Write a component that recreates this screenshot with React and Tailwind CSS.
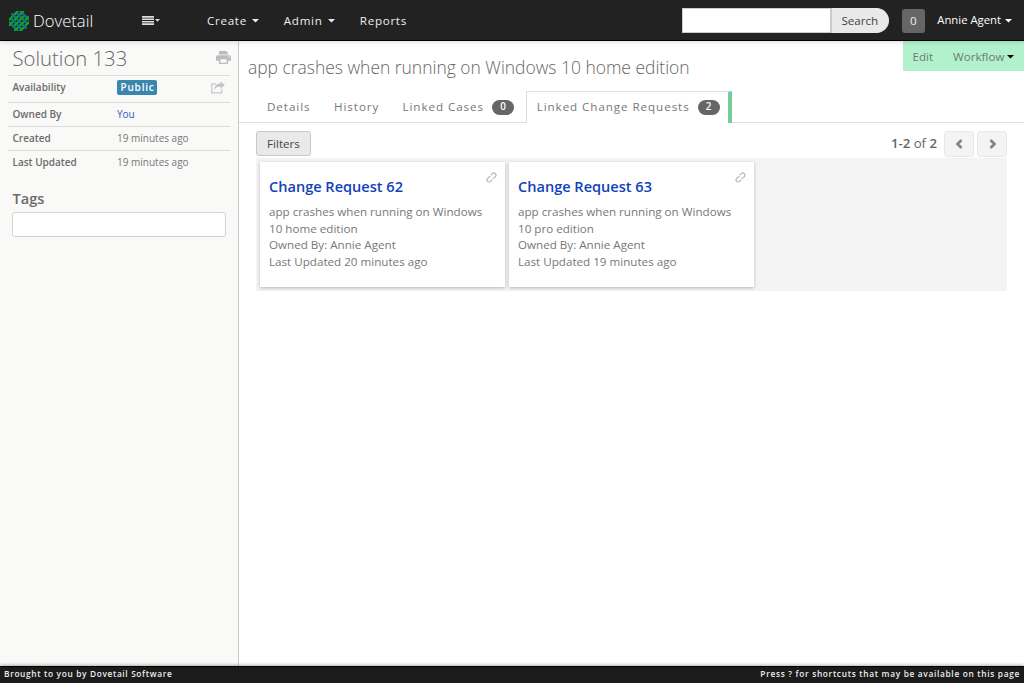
import React from 'react';

function Caret({ className = '' }) {
  return (
    <svg className={`mt-[1px] h-[4px] w-[7px] shrink-0 ${className}`} viewBox="0 0 7 4" fill="currentColor">
      <path d="M0 0h7L3.5 3.6z" />
    </svg>
  );
}

const STRANDS = [-2, -1, 0, 1, 2];

function Logo() {
  return (
    <svg className="h-5 w-5 shrink-0" viewBox="-10 -10 20 20">
      <clipPath id="logo-round"><path d="M-6-10H6L10-6V6L6 10H-6L-10 6V-6z" /></clipPath>
      <g clipPath="url(#logo-round)">
        <g transform="rotate(45)">
          {STRANDS.flatMap((i) =>
            STRANDS.map((j) => {
              const blue = (i + j) % 2 === 0;
              const x = i * 3.9;
              const y = j * 3.9;
              return blue ? (
                <rect key={`${i},${j}`} x={x - 2.7} y={y - 1.1} width="5.4" height="2.2" fill="#12779f" />
              ) : (
                <rect key={`${i},${j}`} x={x - 1.1} y={y - 2.7} width="2.2" height="5.4" fill="#0fae1c" />
              );
            })
          )}
        </g>
      </g>
    </svg>
  );
}

function PrintIcon() {
  return (
    <svg className="h-[13px] w-[15px]" viewBox="0 0 15 13" fill="#bcbcbc">
      <path d="M3 0h7l2 2v1.500H3z" />
      <path fillRule="evenodd" d="M1.500 4.300h12Q15 4.300 15 5.800V9.700h-3V13H3V9.700H0V5.800Q0 4.300 1.500 4.300zM4.400 8.300v3.400h6.200V8.300zM12.300 5.600v1.100h1.200V5.600z" />
    </svg>
  );
}

function ShareIcon() {
  return (
    <svg className="h-[13px] w-[14px]" viewBox="0 0 14 13">
      <path d="M5 2.900H.8v9h9.900V8.200" fill="none" stroke="#c8c8c8" strokeWidth="1.300" />
      <path d="M9.400.4L13.900 4 9.400 7.800V5.600C6.500 5.500 4.700 6.600 3.400 9 3.300 5.200 5.600 2.600 9.400 2.500z" fill="#c4c4c4" />
    </svg>
  );
}

function LinkIcon() {
  return (
    <svg className="h-[11px] w-[11px]" viewBox="0 0 24 24" fill="none" stroke="#b4b4b4" strokeWidth="2.600" strokeLinecap="round">
      <g transform="rotate(-45 12 12)">
        <path d="M8.500 16.500H4.700A4.500 4.500 0 0 1 4.700 7.500H8.500a4 4 0 0 1 2.500 1" />
        <path d="M15.500 7.500h3.800a4.500 4.500 0 0 1 0 9h-3.800a4 4 0 0 1-2.500-1" />
      </g>
    </svg>
  );
}

function Header() {
  return (
    <header className="relative z-10 flex h-[41px] shrink-0 items-center border-b border-black bg-[#222] pt-[1px] pl-[9px] text-[11.640px] text-[#eee] shadow-[0_1px_5px_rgba(0,0,0,0.15)]">
      <div className="flex w-[133px] items-center gap-[4px]">
        <Logo />
        <span className="text-[16.640px] leading-[20px] font-light text-white">Dovetail</span>
      </div>
      <div className="flex w-[65px] items-center">
        <svg className="h-[9px] w-[12px]" viewBox="0 0 12 9" fill="#ddd">
          <path d="M0 0h12v1.700H0zM0 2.400h12v1.700H0zM0 4.900h12v1.700H0zM0 7.300h12V9H0z" />
        </svg>
        <svg className="ml-[1px] h-[3px] w-[5px]" viewBox="0 0 5 3" fill="#ddd"><path d="M0 0h5L2.500 2.800z" /></svg>
      </div>
      <nav className="flex flex-1 items-center tracking-[0.700px]">
        <a className="flex w-[76.800px] items-center gap-[5.500px]">Create<Caret /></a>
        <a className="flex w-[76px] items-center gap-[5.500px]">Admin<Caret /></a>
        <a>Reports</a>
      </nav>
      <div className="flex h-[25px] w-[207px]">
        <div className="w-[149px] border border-[#ccc] bg-white" />
        <button className="flex w-[58px] items-center justify-center rounded-r-full border border-[#e8e8e8] border-l-[#ccc] bg-[#e9e9e9] pr-[1px] text-[#444]">Search</button>
      </div>
      <div className="ml-[13px] flex h-[24px] w-[23px] items-center justify-center rounded-[3px] bg-[#666] pr-[1px] text-[#eee]">0</div>
      <a className="mr-[12px] ml-[12px] flex items-center gap-[4px] text-[11.300px] text-white">Annie Agent<Caret /></a>
    </header>
  );
}

function Row({ label, height, children }) {
  return (
    <div className={`flex items-center border-t border-[#ddd] pl-[4.500px] text-[10px] ${height}`}>
      <div className="w-[104.500px] font-semibold text-[#6b6b6b]">{label}</div>
      <div className="flex flex-1 items-center justify-between text-[#777]">{children}</div>
    </div>
  );
}

function Sidebar() {
  return (
    <aside className="flex w-[239px] shrink-0 flex-col border-r border-[#c8c8c8] bg-[#f9f9f8] pr-[8px] pl-[8px]">
      <div className="flex h-[34px] items-center justify-between pl-[4.500px]">
        <h1 className="text-[20.300px] leading-[24px] font-light text-[#666]">Solution 133</h1>
        <span className="-mr-[1px] pb-[1px]"><PrintIcon /></span>
      </div>
      <Row label="Availability" height="h-[27px] pb-[3px]">
        <span className="flex h-[15px] items-center rounded-[2px] bg-[#3a87ad] pr-[2.500px] pl-[3.500px] font-semibold tracking-[0.800px] text-white">Public</span>
        <span className="mr-[5px]"><ShareIcon /></span>
      </Row>
      <Row label="Owned By" height="h-[24px]"><a className="text-[#3a56b5]">You</a></Row>
      <Row label="Created" height="h-[24px]">19 minutes ago</Row>
      <Row label="Last Updated" height="h-[24px]">19 minutes ago</Row>
      <h2 className="mt-[14px] pl-[4.500px] text-[14.560px] leading-[20px] font-semibold text-[#6b6b6b]">Tags</h2>
      <div className="mt-[4px] ml-[4px] h-[25px] w-[214px] rounded-[3px] border border-[#d3d3d3] bg-white" />
    </aside>
  );
}

function Count({ children }) {
  return (
    <span className="mt-[2px] flex h-[15px] w-[22px] items-center justify-center rounded-full bg-[#666] text-[9.800px] font-semibold tracking-normal text-white">{children}</span>
  );
}

function Card({ title, description, updated }) {
  return (
    <article className="h-[125px] w-[245px] bg-white pt-[10px] pr-[8px] pl-[9px] text-[11.640px] leading-[16.640px] text-[#777] shadow-[0_1px_3px_rgba(0,0,0,0.25)]">
      <div className="flex justify-between">
        <h3 className="pt-[4px] text-[14.560px] leading-[21px] font-semibold text-[#0f42bb]">{title}</h3>
        <LinkIcon />
      </div>
      <p className="mt-[7px] w-[220px]">{description}</p>
      <p>Owned By: Annie Agent</p>
      <p>Last Updated {updated}</p>
    </article>
  );
}

function PageButton({ points }) {
  return (
    <button className="flex h-[26px] w-[30px] items-center justify-center rounded-[3px] border border-[#e9e9e9] bg-[#f4f4f4] pr-[1px]">
      <svg className="h-[10px] w-[8px]" viewBox="0 0 8 10" fill="none" stroke="#858585" strokeWidth="2.700"><polyline points={points} /></svg>
    </button>
  );
}

function Main() {
  return (
    <main className="flex min-w-0 flex-1 flex-col">
      <div className="flex h-[50px] items-start justify-between pl-[9px]">
        <h2 className="pt-[14px] text-[17.440px] leading-[24px] font-light text-[#666]">app crashes when running on Windows 10 home edition</h2>
        <div className="flex h-[30px] w-[121px] items-center bg-[#b1f2cc] pt-[2px] pl-[9.500px] text-[11.640px] text-[#6d7b73]">
          <a className="w-[40.500px]">Edit</a>
          <a className="flex items-center gap-[3px]">Workflow<Caret className="text-black" /></a>
        </div>
      </div>
      <div className="flex h-[32px] items-stretch text-[11.640px] tracking-[0.930px] text-[#777]">
        <div className="flex w-[287px] items-center border-b border-[#ddd] pl-[28px]">
          <a className="w-[67px]">Details</a>
          <a className="w-[68.500px]">History</a>
          <a className="flex items-center gap-[8px] whitespace-nowrap">Linked Cases<Count>0</Count></a>
        </div>
        <a className="flex w-[206px] items-center gap-[8px] border-t border-r-4 border-l border-t-[#ddd] border-r-[#74ce9b] border-l-[#ddd] pb-[2px] pl-[9.700px] whitespace-nowrap">
          Linked Change Requests<Count>2</Count>
        </a>
        <div className="flex-1 border-b border-[#ddd]" />
      </div>
      <div className="flex h-[35px] items-start justify-between pt-[8px] pr-[17px] pl-[17px]">
        <button className="flex h-[25px] w-[55px] items-center justify-center rounded-[3px] border border-[#c8c8c8] bg-[#e9e9e9] text-[11.640px] text-[#444]">Filters</button>
        <div className="flex items-center gap-[3px] text-[13.200px] text-[#666]">
          <span className="mr-[4px]"><b className="font-semibold">1-2</b> of <b className="font-semibold">2</b></span>
          <PageButton points="6.500,1 2.500,5 6.500,9" />
          <PageButton points="2.500,1 6.500,5 2.500,9" />
        </div>
      </div>
      <section className="mr-[17px] ml-[17px] flex h-[133px] gap-[4px] bg-[#f3f3f3] pt-[4px] pl-[4px]">
        <Card title="Change Request 62" description="app crashes when running on Windows 10 home edition" updated="20 minutes ago" />
        <Card title="Change Request 63" description="app crashes when running on Windows 10 pro edition" updated="19 minutes ago" />
      </section>
    </main>
  );
}

export default function App() {
  return (
    <div className="flex h-screen w-full flex-col overflow-hidden bg-white font-['Open_Sans','Noto_Sans',sans-serif]">
      <Header />
      <div className="flex min-h-0 flex-1">
        <Sidebar />
        <Main />
      </div>
      <footer className="relative flex h-[17px] shrink-0 items-center justify-between border-t border-black bg-[#1b1b1b] px-[4px] pb-[2px] text-[8.320px] font-semibold tracking-[0.660px] text-[#eee] shadow-[0_-1px_3px_rgba(0,0,0,0.3)]">
        <span>Brought to you by Dovetail Software</span>
        <span className="tracking-[0.690px]">Press ? for shortcuts that may be available on this page</span>
      </footer>
    </div>
  );
}
